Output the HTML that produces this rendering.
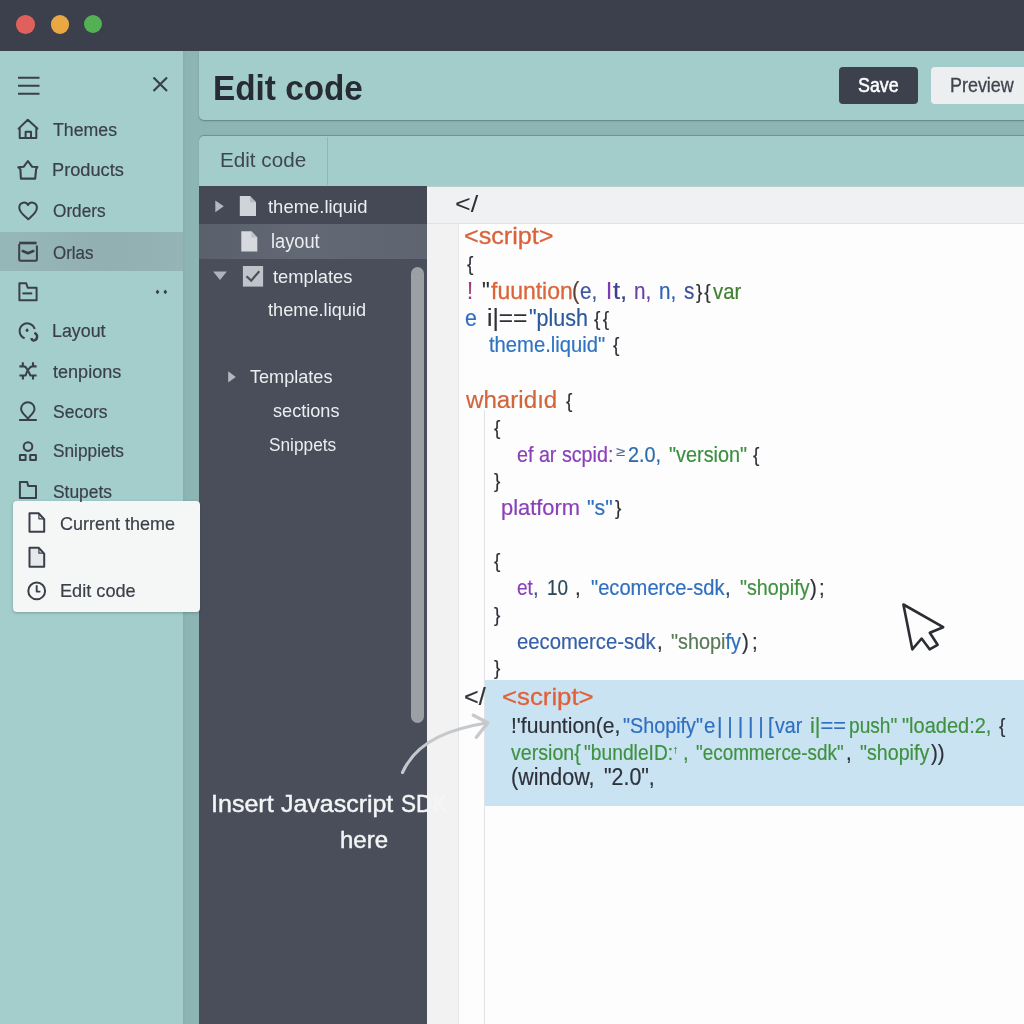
<!DOCTYPE html>
<html>
<head>
<meta charset="utf-8">
<title>Edit code</title>
<style>
*{box-sizing:border-box;margin:0;padding:0}
html,body{width:1024px;height:1024px;overflow:hidden}
body{position:relative;background:#8db5b4;font-family:"Liberation Sans",sans-serif;color:#3a3f49}
.abs{position:absolute}
.t{position:absolute;white-space:pre;line-height:1;transform-origin:0 0;font-family:"Liberation Sans",sans-serif}
#titlebar{left:0;top:0;width:1024px;height:51px;background:#3b404c}
.dot{position:absolute;width:18.6px;height:18.6px;border-radius:50%;top:15.1px}
#sidebar{left:0;top:51px;width:183px;height:973px;background:#a4cecc}
#sidegap{left:183px;top:51px;width:16px;height:973px;background:linear-gradient(90deg,#86aeae 0,#8db5b4 3px,#8db5b4 100%)}
#selrow{left:0;top:232px;width:183px;height:39px;background:linear-gradient(90deg,#96b7b8,#92afb2 60%,#95b4b6)}
#header{left:199px;top:51px;width:830px;height:69px;background:#a3cdcb;border-radius:0 0 0 5px;box-shadow:0 1px 1.5px rgba(70,100,100,.6)}
#save{left:838.5px;top:67px;width:79px;height:36.5px;background:#3c414d;border-radius:4px}
#preview{left:931px;top:67px;width:100px;height:36.5px;background:#eceeef;border-radius:4px}
#tabs{left:199px;top:136px;width:830px;height:50px;background:#a3cdcb;border-radius:5px 0 0 0;box-shadow:0 -1px 1px rgba(70,100,100,.45)}
#tabsep{left:327px;top:137px;width:1px;height:48px;background:#8fb5b4}
#tree{left:199px;top:185.5px;width:228px;height:839px;background:#494e5a}
#row1{left:199px;top:185.5px;width:228px;height:38px;background:#444955}
#row2{left:199px;top:223.5px;width:228px;height:35.5px;background:linear-gradient(90deg,#59606c,#626975 45%,#5e6571)}
#scroll{left:410.5px;top:267px;width:13px;height:456px;background:#9c9fa4;border-radius:6.5px}
#edtop{left:427px;top:185.5px;width:600px;height:38.5px;background:#f0f1f2;border-bottom:1px solid #dfe2e5;border-top:1px solid #b9cfd2}
#gutter{left:427px;top:224px;width:32px;height:800px;background:#f2f2f3;border-right:1px solid #e4e6e8}
#code{left:459px;top:224px;width:565px;height:800px;background:#fdfdfd}
#guide{left:483.5px;top:410px;width:1px;height:614px;background:#dfe2e5}
#hl{left:484.5px;top:679.5px;width:540px;height:126px;background:#c9e3f3}
#popup{left:13.3px;top:501px;width:186.7px;height:111px;background:#f5f6f6;border-radius:4px;box-shadow:0 1px 3px rgba(40,70,70,.35)}
svg.ov{position:absolute;left:0;top:0;overflow:visible}
</style>
</head>
<body>
<div id="titlebar" class="abs"></div>
<div class="dot" style="left:16.3px;background:#e0605c"></div>
<div class="dot" style="left:50.6px;background:#eaa845"></div>
<div class="dot" style="left:84.3px;top:15.4px;width:18px;height:18px;background:#54b054"></div>

<div id="sidebar" class="abs"></div>
<div id="sidegap" class="abs"></div>
<div id="selrow" class="abs"></div>

<div id="header" class="abs"></div>
<div id="save" class="abs"></div>
<div id="preview" class="abs"></div>

<div id="tabs" class="abs"></div>
<div id="tabsep" class="abs"></div>

<div id="tree" class="abs"></div>
<div id="row1" class="abs"></div>
<div id="row2" class="abs"></div>
<div id="scroll" class="abs"></div>

<div id="edtop" class="abs"></div>
<div id="gutter" class="abs"></div>
<div id="code" class="abs"></div>
<div id="guide" class="abs"></div>
<div id="hl" class="abs"></div>

<div id="popup" class="abs"></div>

<!-- icons & shapes overlay -->
<svg class="ov" width="1024" height="1024" viewBox="0 0 1024 1024" fill="none" stroke="#3a3f49" stroke-width="2" stroke-linejoin="round" stroke-linecap="butt">
  <!-- hamburger -->
  <path d="M18 77.8H39.5M18 85.8H39.5M18 93.8H39.5" stroke-width="2.1"/>
  <!-- close X -->
  <path d="M153.5 77.5L167 91M167 77.5L153.5 91" stroke-width="2.2"/>
  <!-- home -->
  <path d="M18.6 128.6L27.8 119.8L37.4 128.6M19.7 127.8V138H36.3V127.8M25.6 138V131.7H31V138" stroke-linecap="round"/>
  <!-- products -->
  <path d="M27.9 161L23.8 166.7L18.3 167.3L20.4 169.2L20.9 178.6H35.2L36.1 169.2L37.4 167L32 166.7Z" stroke-width="2.1"/>
  <!-- heart -->
  <path d="M28 205C26.4 201.6 19.3 201.2 19.3 207.8C19.3 212.6 24 215.4 28.2 219.2C32.6 215.4 36.9 212.6 36.9 207.8C36.9 201.2 29.6 201.6 28 205Z"/>
  <!-- orlas box -->
  <path d="M19.2 243H36.6" stroke-width="2.6"/>
  <path d="M19.2 244V259.3Q19.2 260.8 20.7 260.8H35.4Q36.9 260.8 36.9 259.3V245.5"/>
  <path d="M22.7 251L28 253.2L33.3 251" stroke-width="2.6" stroke-linecap="round"/>
  <!-- folder minus -->
  <path d="M19.4 283.3H26.2L27.7 287.7H36.6V300.3H19.4Z"/>
  <path d="M22.4 293.4H32.2" stroke-width="2"/>
  <!-- dots -->
  <path d="M157.5 289.6L159.4 292L157.5 294.2L155.6 292ZM165.3 289.6L167.2 292L165.3 294.2L163.4 292Z" fill="#3a3f49" stroke="none"/>
  <!-- layout -->
  <path d="M34.7 329.1A7.65 7.65 0 1 0 24.6 338.2"/>
  <ellipse cx="27.1" cy="330.3" rx="1.4" ry="1.8" fill="#3a3f49" stroke="none"/>
  <path d="M34.4 332.8C38.4 334.6 38 340.2 33.4 340.6C32.2 340.4 31.6 339.2 31.6 338" stroke-width="2.4"/>
  <!-- tenpions -->
  <path d="M19.4 366.4H24C26.6 366.4 26.6 369.4 28.6 371.6M36.6 366.4H32.4C29.8 366.4 29 369 27.2 371M19.4 375.5H25.6L27.2 371M36.6 375.5H30.4L28.6 371.6M22.8 366V362.2M33 366V362.2M22.9 376V379.6M33 376V379.6" stroke-width="2.1"/>
  <!-- secors -->
  <path d="M27.9 418.6C24.4 414.5 21.1 412.3 21.1 408.9A6.7 6.7 0 1 1 34.5 408.9C34.5 412.3 31.3 414.5 27.9 418.6Z"/>
  <path d="M19.1 420H36.8" stroke-width="2"/>
  <!-- snippiets -->
  <circle cx="28" cy="446.6" r="4.3"/>
  <rect x="19.9" y="455" width="5.7" height="5"/>
  <rect x="30.2" y="455" width="5.7" height="5"/>
  <!-- stupets folder -->
  <path d="M19.9 481.9H27.2L28.2 486H36V498H19.9Z"/>

  <!-- popup icons -->
  <path d="M29.5 513.3H38.6L44.2 519.2V531.8H29.5Z"/>
  <path d="M38.9 514V518.8H43.6" stroke-width="1.2"/>
  <path d="M29.5 547.7H38.6L44.2 553.6V566.8H29.5Z" fill="#e6e9ec"/>
  <path d="M38.9 548.4V553.2H43.6" stroke-width="1.2"/>
  <circle cx="36.7" cy="590.9" r="8.4"/>
  <path d="M36.7 585.3V591.6H40.4" stroke-width="1.9"/>

  <!-- tree icons -->
  <g stroke="none">
    <path d="M215.3 200.4L223.8 206.3L215.3 212.3Z" fill="#b3b8bf"/>
    <path d="M239.8 196H250L256 202.2V216H239.8Z" fill="#d0d4d9"/>
    <path d="M250 196V202.2H256Z" fill="#b4b9c0"/>
    <path d="M241.3 231.2H251.4L257.3 237.4V251.6H241.3Z" fill="#d6dadf"/>
    <path d="M251.4 231.2V237.4H257.3Z" fill="#bcc1c8"/>
    <path d="M213.1 271.6H226.9L220 280Z" fill="#aeb3bb"/>
    <rect x="242.9" y="266" width="20.2" height="20.6" fill="#bfc4ca"/>
    <path d="M228.2 371.3L235.8 376.9L228.2 382.5Z" fill="#b3b8bf"/>
  </g>
  <path d="M246.5 276.3L251.2 280.6L259.3 271.2" stroke="#4a505c" stroke-width="2.2" stroke-linejoin="miter"/>

  <!-- annotation arrow -->
  <path d="M402.5 772.5C417.6 738.7 455.2 728.1 487.5 722.8" stroke="#c5c8cc" stroke-width="3.1" stroke-linecap="round"/>
  <path d="M473.3 715.2L487.8 722.8L476.4 737.3" stroke="#c7c9cc" stroke-width="3.4" stroke-linecap="round" stroke-linejoin="round"/>

  <!-- mouse cursor -->
  <path d="M903.4 604.5L943.2 627.2L929.8 632.8L937.6 644.8L929.6 649.3L921.6 638.5L912.3 649.3Z" fill="#fdfdfd" stroke="#2a2d33" stroke-width="2.6" stroke-linejoin="round"/>
</svg>

<div id="txt" style="position:absolute;left:0;top:0;width:1024px;height:1024px;will-change:transform">
<div class="t" style="left:53.00px;top:120.60px;font-size:18px;color:#3a3f49;transform:scaleX(0.9843);-webkit-text-stroke:0.2px">Themes</div>
<div class="t" style="left:52.19px;top:161.20px;font-size:18px;color:#3a3f49;transform:scaleX(1.0109);-webkit-text-stroke:0.2px">Products</div>
<div class="t" style="left:53.00px;top:201.60px;font-size:18px;color:#3a3f49;transform:scaleX(0.9562);-webkit-text-stroke:0.2px">Orders</div>
<div class="t" style="left:53.30px;top:243.70px;font-size:18px;color:#3a3f49;transform:scaleX(0.9418);-webkit-text-stroke:0.2px">Orlas</div>
<div class="t" style="left:52.31px;top:322.00px;font-size:18px;color:#3a3f49;transform:scaleX(0.9898);-webkit-text-stroke:0.2px">Layout</div>
<div class="t" style="left:52.70px;top:362.50px;font-size:18px;color:#3a3f49;transform:scaleX(1.0036);-webkit-text-stroke:0.2px">tenpions</div>
<div class="t" style="left:53.20px;top:402.50px;font-size:18px;color:#3a3f49;transform:scaleX(0.9746);-webkit-text-stroke:0.2px">Secors</div>
<div class="t" style="left:53.00px;top:442.00px;font-size:18px;color:#3a3f49;transform:scaleX(0.9588);-webkit-text-stroke:0.2px">Snippiets</div>
<div class="t" style="left:53.00px;top:482.50px;font-size:18px;color:#3a3f49;transform:scaleX(0.9666);-webkit-text-stroke:0.2px">Stupets</div>
<div class="t" style="left:59.80px;top:514.50px;font-size:18.5px;color:#3a3f49;transform:scaleX(0.9724);-webkit-text-stroke:0.2px">Current theme</div>
<div class="t" style="left:59.62px;top:582.00px;font-size:18.5px;color:#3a3f49;transform:scaleX(0.9809);-webkit-text-stroke:0.2px">Edit code</div>
<div class="t" style="left:213.10px;top:70.00px;font-size:35px;color:#272b33;transform:scaleX(0.9513);font-weight:700">Edit code</div>
<div class="t" style="left:858.20px;top:75.80px;font-size:19.5px;color:#ffffff;transform:scaleX(0.9151);-webkit-text-stroke:0.5px">Save</div>
<div class="t" style="left:949.58px;top:75.80px;font-size:19.5px;color:#3f444e;transform:scaleX(0.9196);-webkit-text-stroke:0.3px">Preview</div>
<div class="t" style="left:219.79px;top:150.00px;font-size:20.5px;color:#3f4650;transform:scaleX(1.0075)">Edit code</div>
<div class="t" style="left:268.10px;top:196.60px;font-size:19px;color:#eceef0;transform:scaleX(0.9707)">theme.liquid</div>
<div class="t" style="left:271.36px;top:232.20px;font-size:19.5px;color:#eceef0;transform:scaleX(0.9357)">layout</div>
<div class="t" style="left:273.00px;top:266.80px;font-size:19px;color:#eceef0;transform:scaleX(0.9649)">templates</div>
<div class="t" style="left:268.00px;top:300.30px;font-size:19px;color:#eceef0;transform:scaleX(0.9570)">theme.liquid</div>
<div class="t" style="left:250.00px;top:366.50px;font-size:19px;color:#eceef0;transform:scaleX(0.9524)">Templates</div>
<div class="t" style="left:273.30px;top:401.00px;font-size:19px;color:#eceef0;transform:scaleX(0.9537)">sections</div>
<div class="t" style="left:268.80px;top:434.80px;font-size:19px;color:#eceef0;transform:scaleX(0.9082)">Snippets</div>
<div class="t" style="left:210.96px;top:791.60px;font-size:24.5px;color:#f4f5f6;transform:scaleX(1.0224);-webkit-text-stroke:0.45px">Insert</div>
<div class="t" style="left:281.30px;top:791.60px;font-size:24.5px;color:#f4f5f6;transform:scaleX(1.0183);-webkit-text-stroke:0.45px">Javascript</div>
<div class="t" style="left:401.08px;top:791.60px;font-size:24.5px;color:#f4f5f6;transform:scaleX(0.9194);-webkit-text-stroke:0.45px">SDK</div>
<div class="t" style="left:339.52px;top:828.30px;font-size:24.5px;color:#f4f5f6;transform:scaleX(0.9808);-webkit-text-stroke:0.45px">here</div>
<div class="t" style="left:455.18px;top:191.80px;font-size:24px;color:#2e3138;transform:scaleX(1.1241)">&lt;/</div>
<div class="t" style="left:463.75px;top:223.80px;font-size:24px;color:#d9623b;transform:scaleX(1.0485);-webkit-text-stroke:0.3px">&lt;script&gt;</div>
<div class="t" style="left:467.39px;top:253.50px;font-size:20.5px;color:#2e3138;transform:scaleX(0.9300);-webkit-text-stroke:0.2px">{</div>
<div class="t" style="left:467.00px;top:279.70px;font-size:23.5px;color:#a03a7a;transform:scaleX(0.9300);-webkit-text-stroke:0.2px">!</div>
<div class="t" style="left:481.56px;top:279.70px;font-size:23.5px;color:#2e3138;transform:scaleX(0.9300);-webkit-text-stroke:0.2px">"</div>
<div class="t" style="left:491.00px;top:278.70px;font-size:24px;color:#dc6438;transform:scaleX(0.9577);-webkit-text-stroke:0.3px">fuuntion</div>
<div class="t" style="left:571.62px;top:279.70px;font-size:23.5px;color:#5a4038;transform:scaleX(0.9300);-webkit-text-stroke:0.2px">(</div>
<div class="t" style="left:580.12px;top:279.70px;font-size:23.5px;color:#3f55a0;transform:scaleX(0.8788);-webkit-text-stroke:0.2px">e,</div>
<div class="t" style="left:605.85px;top:279.70px;font-size:23.5px;color:#7a3fb0;transform:scaleX(0.9300);-webkit-text-stroke:0.2px">I</div>
<div class="t" style="left:613.00px;top:279.70px;font-size:23.5px;color:#3f3f90;transform:scaleX(1.0842);-webkit-text-stroke:0.2px">t,</div>
<div class="t" style="left:634.12px;top:279.70px;font-size:23.5px;color:#6a3fa0;transform:scaleX(0.8788);-webkit-text-stroke:0.2px">n,</div>
<div class="t" style="left:658.62px;top:279.70px;font-size:23.5px;color:#2f62b5;transform:scaleX(0.8788);-webkit-text-stroke:0.2px">n,</div>
<div class="t" style="left:684.00px;top:279.70px;font-size:23.5px;color:#3f4f95;transform:scaleX(0.8818);-webkit-text-stroke:0.2px">s</div>
<div class="t" style="left:696.13px;top:281.70px;font-size:20.5px;color:#2e3138;transform:scaleX(0.9300);letter-spacing:2px;-webkit-text-stroke:0.2px">}{</div>
<div class="t" style="left:712.60px;top:280.70px;font-size:22px;color:#3f7f2f;transform:scaleX(0.9228);-webkit-text-stroke:0.2px">var</div>
<div class="t" style="left:465.42px;top:306.60px;font-size:23px;color:#2f6fc0;transform:scaleX(0.9300);-webkit-text-stroke:0.2px">e</div>
<div class="t" style="left:486.73px;top:306.60px;font-size:23px;color:#2e3138;transform:scaleX(1.0653);-webkit-text-stroke:0.2px">i|==</div>
<div class="t" style="left:528.50px;top:306.60px;font-size:23px;color:#2a5a9a;transform:scaleX(0.9333);-webkit-text-stroke:0.2px">"plush</div>
<div class="t" style="left:594.40px;top:308.60px;font-size:20.5px;color:#2e3138;transform:scaleX(0.9300);letter-spacing:2.5px;-webkit-text-stroke:0.2px">{{</div>
<div class="t" style="left:488.50px;top:333.50px;font-size:22px;color:#2f74c0;transform:scaleX(0.9194);-webkit-text-stroke:0.2px">theme.liquid"</div>
<div class="t" style="left:613.35px;top:334.50px;font-size:20.5px;color:#2e3138;transform:scaleX(0.9300);-webkit-text-stroke:0.2px">{</div>
<div class="t" style="left:465.83px;top:388.60px;font-size:23.5px;color:#d1653c;transform:scaleX(1.0275);-webkit-text-stroke:0.2px">wharidıd</div>
<div class="t" style="left:565.85px;top:390.60px;font-size:20.5px;color:#2e3138;transform:scaleX(0.9300);-webkit-text-stroke:0.2px">{</div>
<div class="t" style="left:494.00px;top:417.80px;font-size:20.5px;color:#2e3138;transform:scaleX(0.9300);-webkit-text-stroke:0.2px">{</div>
<div class="t" style="left:516.80px;top:444.00px;font-size:22px;color:#8a40b8;transform:scaleX(0.8958);-webkit-text-stroke:0.2px">ef ar scpid:</div>
<div class="t" style="left:616.00px;top:444.50px;font-size:13px;color:#4a6a8a;transform:scaleX(1.2429);-webkit-text-stroke:0.2px">≥</div>
<div class="t" style="left:627.60px;top:444.00px;font-size:22px;color:#2f6aa8;transform:scaleX(0.9022);-webkit-text-stroke:0.2px">2.0,</div>
<div class="t" style="left:669.30px;top:444.00px;font-size:22px;color:#3a8f3f;transform:scaleX(0.9028);-webkit-text-stroke:0.2px">"version"</div>
<div class="t" style="left:752.60px;top:445.00px;font-size:20.5px;color:#2e3138;transform:scaleX(0.9300);-webkit-text-stroke:0.2px">{</div>
<div class="t" style="left:494.25px;top:471.00px;font-size:20.5px;color:#2e3138;transform:scaleX(0.9300);-webkit-text-stroke:0.2px">}</div>
<div class="t" style="left:501.31px;top:497.00px;font-size:22px;color:#8a40b8;transform:scaleX(0.9942);-webkit-text-stroke:0.2px">platform</div>
<div class="t" style="left:587.30px;top:497.00px;font-size:22px;color:#2f6fc0;transform:scaleX(0.9648);-webkit-text-stroke:0.2px">"s"</div>
<div class="t" style="left:614.50px;top:498.00px;font-size:20.5px;color:#2e3138;transform:scaleX(0.9300);-webkit-text-stroke:0.2px">}</div>
<div class="t" style="left:493.89px;top:551.30px;font-size:20.5px;color:#2e3138;transform:scaleX(0.9300);-webkit-text-stroke:0.2px">{</div>
<div class="t" style="left:516.80px;top:577.00px;font-size:22px;color:#8a40b8;transform:scaleX(0.8610);-webkit-text-stroke:0.2px">et</div>
<div class="t" style="left:532.86px;top:577.00px;font-size:22px;color:#3f55a0;transform:scaleX(0.9300);-webkit-text-stroke:0.2px">,</div>
<div class="t" style="left:546.64px;top:577.00px;font-size:22px;color:#2a4a5a;transform:scaleX(0.8608);-webkit-text-stroke:0.2px">10</div>
<div class="t" style="left:575.36px;top:577.00px;font-size:22px;color:#2e3138;transform:scaleX(0.9300);-webkit-text-stroke:0.2px">,</div>
<div class="t" style="left:590.50px;top:577.00px;font-size:22px;color:#2f6fc0;transform:scaleX(0.9152);-webkit-text-stroke:0.2px">"ecomerce-sdk</div>
<div class="t" style="left:725.36px;top:577.00px;font-size:22px;color:#2a4a6a;transform:scaleX(0.9300);-webkit-text-stroke:0.2px">,</div>
<div class="t" style="left:740.00px;top:577.00px;font-size:22px;color:#3f913f;transform:scaleX(0.8966);-webkit-text-stroke:0.2px">"shopify</div>
<div class="t" style="left:809.96px;top:577.00px;font-size:22px;color:#2e3138;transform:scaleX(0.9300);-webkit-text-stroke:0.2px">)</div>
<div class="t" style="left:818.81px;top:577.00px;font-size:22px;color:#2e3138;transform:scaleX(0.9300);-webkit-text-stroke:0.2px">;</div>
<div class="t" style="left:493.89px;top:604.50px;font-size:20.5px;color:#2e3138;transform:scaleX(0.9300);-webkit-text-stroke:0.2px">}</div>
<div class="t" style="left:516.80px;top:630.80px;font-size:22px;color:#3560a8;transform:scaleX(0.9215);-webkit-text-stroke:0.2px">eecomerce-sdk</div>
<div class="t" style="left:657.11px;top:630.80px;font-size:22px;color:#2e3138;transform:scaleX(0.9300);-webkit-text-stroke:0.2px">,</div>
<div class="t" style="left:670.80px;top:630.80px;font-size:22px;color:#5a7a5a;transform:scaleX(0.9018);-webkit-text-stroke:0.2px"><span style="color:#5a7a5a">"shopi</span><span style="color:#2f6fc0">fy</span></div>
<div class="t" style="left:741.96px;top:630.80px;font-size:22px;color:#2e3138;transform:scaleX(0.9300);-webkit-text-stroke:0.2px">)</div>
<div class="t" style="left:751.56px;top:630.80px;font-size:22px;color:#2e3138;transform:scaleX(0.9300);-webkit-text-stroke:0.2px">;</div>
<div class="t" style="left:493.89px;top:658.00px;font-size:20.5px;color:#2e3138;transform:scaleX(0.9300);-webkit-text-stroke:0.2px">}</div>
<div class="t" style="left:463.71px;top:686.20px;font-size:23px;color:#2e3138;transform:scaleX(1.0910);-webkit-text-stroke:0.2px">&lt;/</div>
<div class="t" style="left:502.43px;top:684.50px;font-size:24px;color:#e06038;transform:scaleX(1.0737);-webkit-text-stroke:0.3px">&lt;script&gt;</div>
<div class="t" style="left:511.34px;top:714.50px;font-size:22px;color:#2e3138;transform:scaleX(0.9575);-webkit-text-stroke:0.2px">!'fuuntion(e,</div>
<div class="t" style="left:623.00px;top:714.50px;font-size:22px;color:#2f6fc0;transform:scaleX(0.8981);-webkit-text-stroke:0.2px">"Shopify"</div>
<div class="t" style="left:704.42px;top:714.50px;font-size:22px;color:#2f6fc0;transform:scaleX(0.9300);-webkit-text-stroke:0.2px">e</div>
<div class="t" style="left:717.03px;top:714.50px;font-size:22px;color:#2f6fc0;transform:scaleX(0.9723);letter-spacing:4.9px;-webkit-text-stroke:0.2px">|||||</div>
<div class="t" style="left:768.25px;top:714.50px;font-size:22px;color:#2f6fc0;transform:scaleX(0.9300);-webkit-text-stroke:0.2px">[</div>
<div class="t" style="left:775.00px;top:714.50px;font-size:22px;color:#2f6fc0;transform:scaleX(0.8930);-webkit-text-stroke:0.2px">var</div>
<div class="t" style="left:809.81px;top:714.50px;font-size:22px;color:#3f913f;transform:scaleX(0.9927);-webkit-text-stroke:0.2px"><span style="color:#3f913f">i|</span><span style="color:#2f6fc0">==</span></div>
<div class="t" style="left:848.63px;top:714.50px;font-size:22px;color:#3f913f;transform:scaleX(0.8695);-webkit-text-stroke:0.2px">push"</div>
<div class="t" style="left:902.20px;top:714.50px;font-size:22px;color:#3f913f;transform:scaleX(0.9093);-webkit-text-stroke:0.2px">"loaded:2,</div>
<div class="t" style="left:999.39px;top:715.50px;font-size:20.5px;color:#2e3138;transform:scaleX(0.9300);-webkit-text-stroke:0.2px">{</div>
<div class="t" style="left:511.00px;top:741.50px;font-size:22px;color:#3f913f;transform:scaleX(0.8919);-webkit-text-stroke:0.2px">version{</div>
<div class="t" style="left:584.00px;top:741.50px;font-size:22px;color:#3f913f;transform:scaleX(0.8744);-webkit-text-stroke:0.2px">"bundleID:</div>
<div class="t" style="left:673.21px;top:743.50px;font-size:11px;color:#3f913f;transform:scaleX(0.9300);-webkit-text-stroke:0.2px">↑</div>
<div class="t" style="left:682.81px;top:741.50px;font-size:22px;color:#3f913f;transform:scaleX(0.9300);-webkit-text-stroke:0.2px">,</div>
<div class="t" style="left:695.50px;top:741.50px;font-size:22px;color:#3f913f;transform:scaleX(0.8582);-webkit-text-stroke:0.2px">"ecommerce-sdk"</div>
<div class="t" style="left:845.96px;top:741.50px;font-size:22px;color:#2e3138;transform:scaleX(0.9300);-webkit-text-stroke:0.2px">,</div>
<div class="t" style="left:859.50px;top:741.50px;font-size:22px;color:#3f913f;transform:scaleX(0.8927);-webkit-text-stroke:0.2px">"shopify</div>
<div class="t" style="left:930.65px;top:741.50px;font-size:22px;color:#2e3138;transform:scaleX(0.9300);-webkit-text-stroke:0.2px">))</div>
<div class="t" style="left:511.37px;top:765.50px;font-size:23px;color:#2e3138;transform:scaleX(0.9323);-webkit-text-stroke:0.2px">(window,</div>
<div class="t" style="left:604.00px;top:765.50px;font-size:23px;color:#2e3138;transform:scaleX(0.9287);-webkit-text-stroke:0.2px">"2.0",</div>
</div>
</body>
</html>
